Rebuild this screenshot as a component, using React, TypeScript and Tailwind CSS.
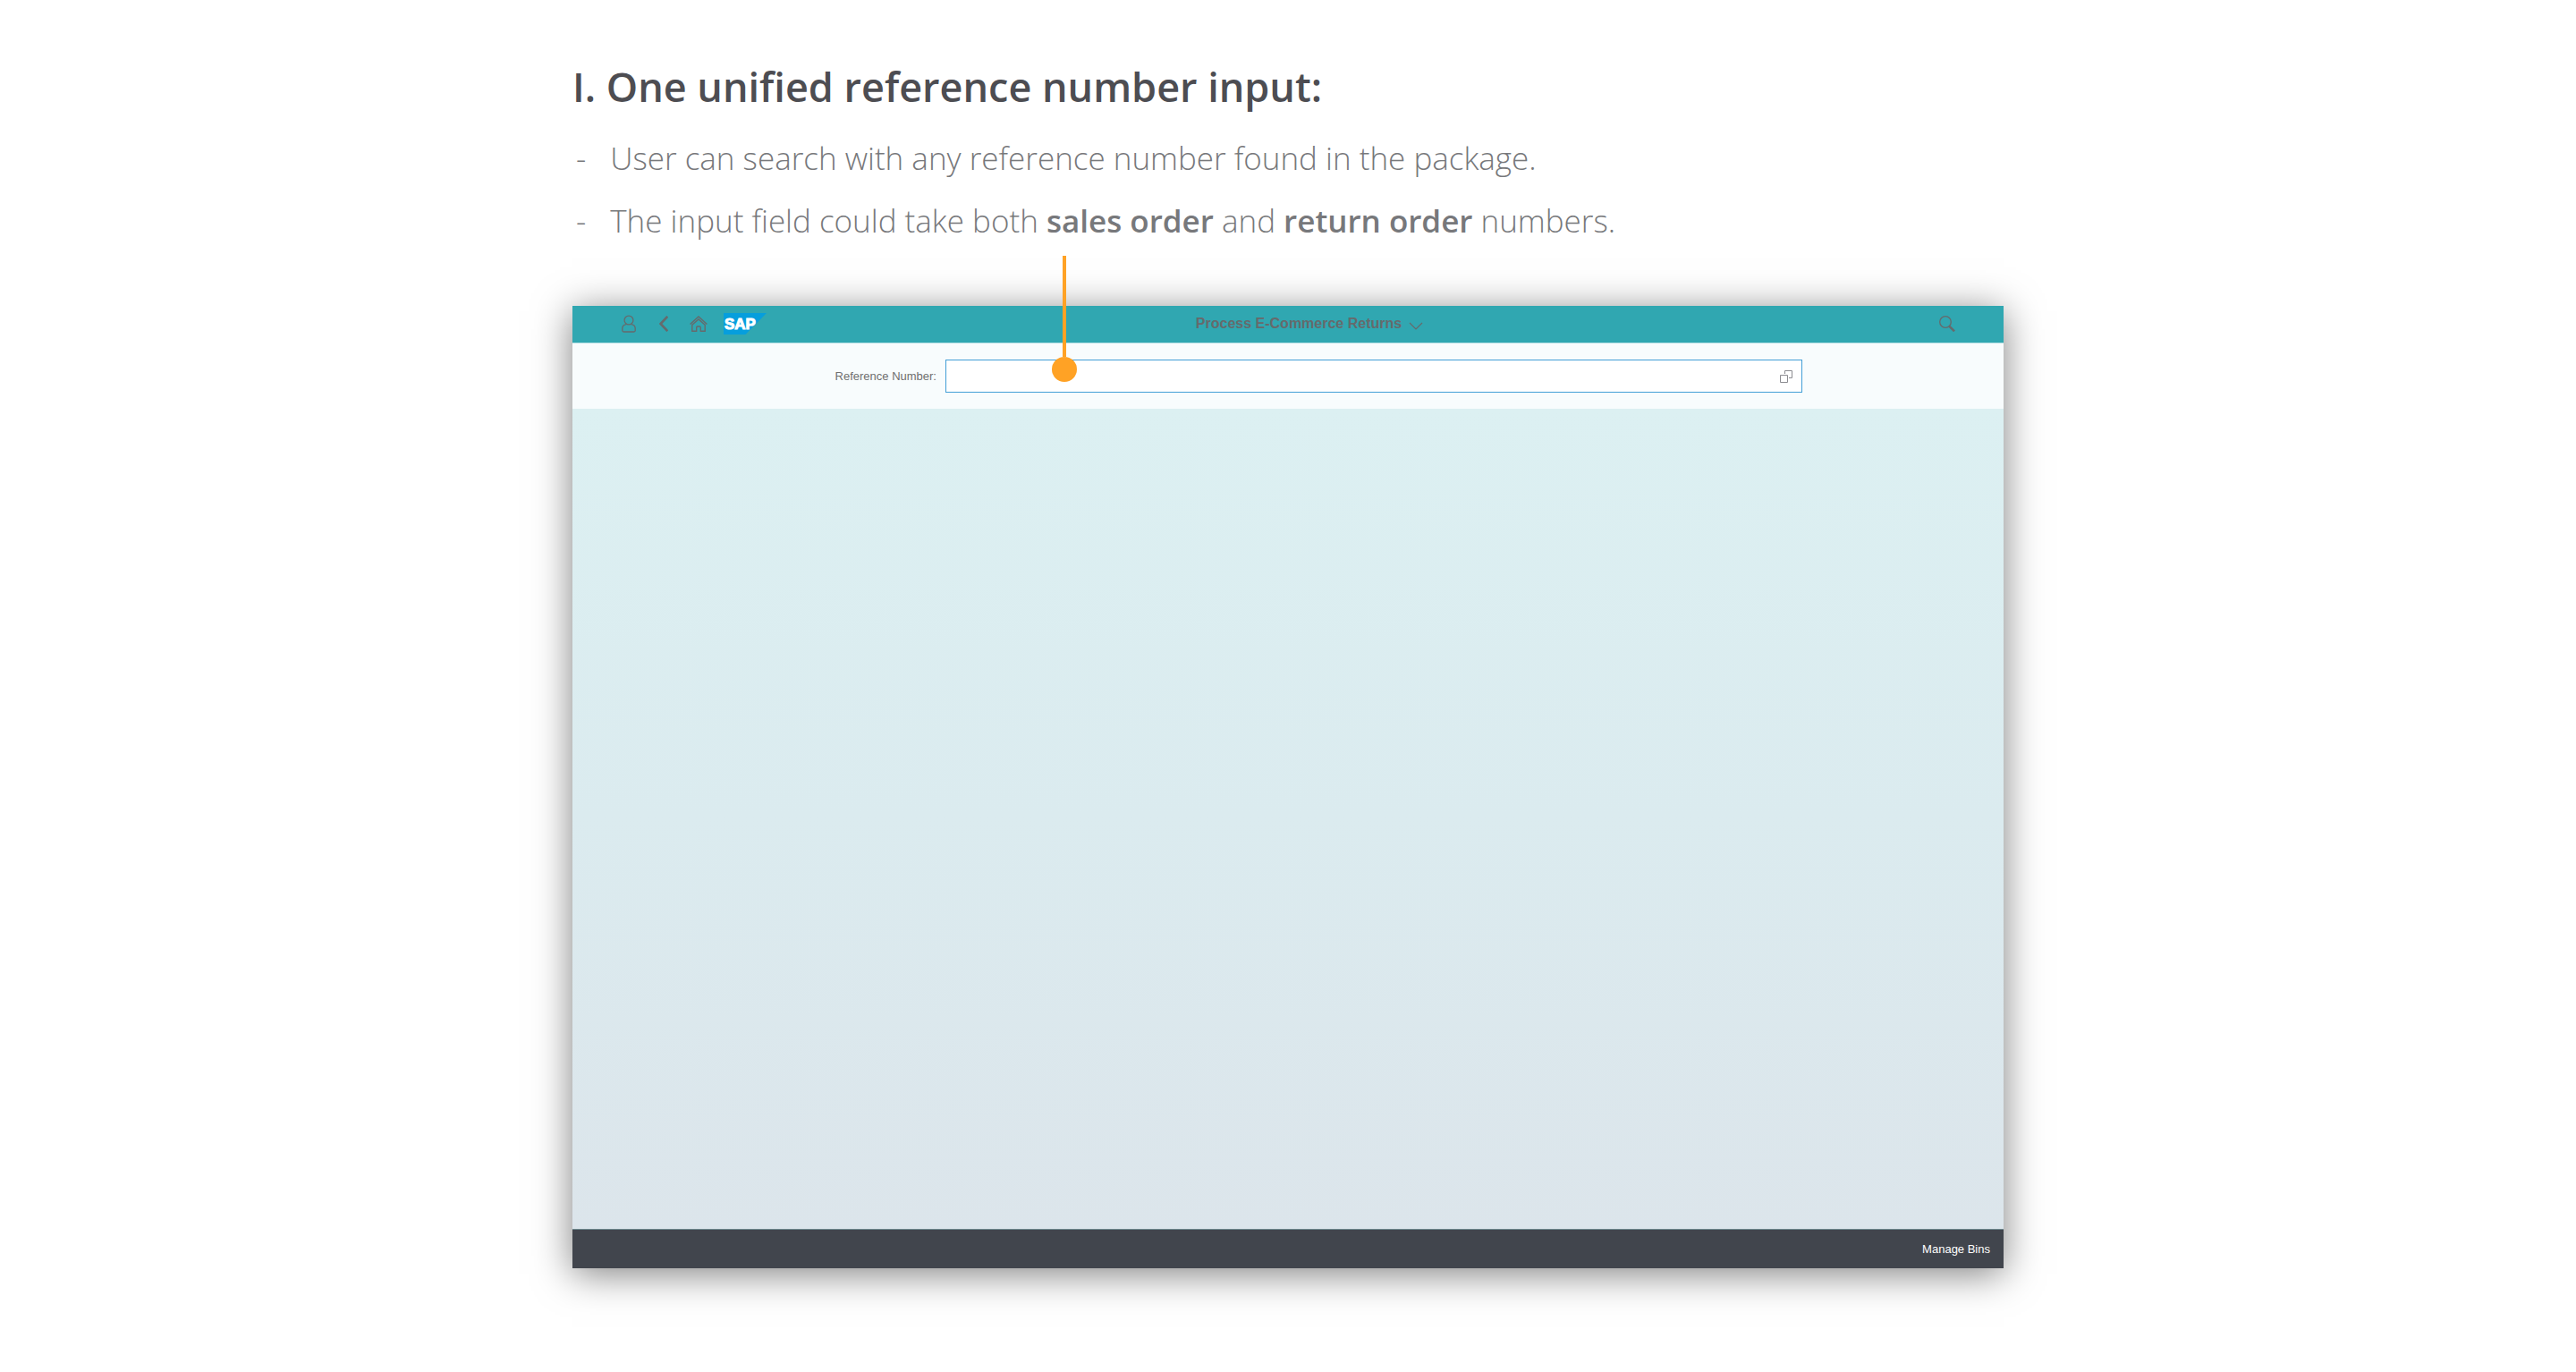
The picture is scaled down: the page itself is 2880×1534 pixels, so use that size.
import React from 'react';

function UserIcon() {
  return (
    <svg width="16" height="20" viewBox="0 0 16 20" fill="none" stroke="currentColor" strokeWidth="1.3" aria-hidden="true">
      <circle cx="8" cy="6" r="4.9" />
      <path d="M5 10.6C2.200 11.200.8 12.600.8 15V17.500Q.8 19 2.300 19H13.700Q15.200 19 15.200 17.500V15C15.200 12.600 13.800 11.200 11 10.600" />
    </svg>
  );
}

function BackIcon() {
  return (
    <svg width="10" height="18" viewBox="0 0 10 18" fill="none" stroke="currentColor" strokeWidth="2.600" aria-hidden="true">
      <path d="M9.300.8 1.500 9 9.300 17.200" />
    </svg>
  );
}

function HomeIcon() {
  return (
    <svg width="20" height="18" viewBox="0 0 20 18" fill="none" stroke="currentColor" strokeWidth="1.400" aria-hidden="true">
      <path d="M.6 9.600 10 1 19.400 9.600" />
      <path d="M2.800 10.300 10 3.900 17.200 10.300V17.300H12.300V13.200Q12.300 12 11.200 12H8.800Q7.700 12 7.700 13.200V17.300H2.800Z" />
    </svg>
  );
}

function SapLogo() {
  return (
    <svg width="48" height="24" viewBox="0 0 48 24" role="img" aria-label="SAP">
      <path d="M0 0H48L24.500 24H0Z" fill="#069edd" />
      <text x="1" y="18" fontFamily="Liberation Sans, Arial, sans-serif" fontWeight="700" fontSize="17" fill="#fff" stroke="#fff" strokeWidth="1">
        SAP
      </text>
    </svg>
  );
}

function ChevronIcon() {
  return (
    <svg width="16" height="9" viewBox="0 0 16 9" fill="none" stroke="currentColor" strokeWidth="1.200" aria-hidden="true">
      <path d="M1 1 8 8 15 1" />
    </svg>
  );
}

function SearchIcon() {
  return (
    <svg width="18" height="18" viewBox="0 0 18 18" fill="none" stroke="currentColor" aria-hidden="true">
      <circle cx="7" cy="7" r="6.300" strokeWidth="1.300" />
      <path d="M11.500 11.800 17 17.300" strokeWidth="2.600" />
    </svg>
  );
}

function ValueHelpIcon() {
  return (
    <svg width="14" height="14" viewBox="0 0 14 14" fill="none" stroke="currentColor" aria-hidden="true">
      <path d="M5.500 4V.5H13.500V8.500H10" />
      <path d="M.5 5.500H8.500V13.500H.5Z" />
    </svg>
  );
}

const noteItem = 'flex gap-[27px]';

export default function App() {
  return (
    <main className="w-full bg-white pt-[65px] pb-[116px]">
      <div className="mx-auto w-full max-w-[1600px] font-['Open_Sans',sans-serif]">
        <h1 className="text-[45px] leading-[64px] font-semibold text-[#4d4d52]">I. One unified reference number input:</h1>
        <ul className="mt-[13px] pl-1 text-[35px] leading-[70px] font-light text-[#77787b]">
          <li className={noteItem}>
            <span aria-hidden="true">-</span>
            <p>User can search with any reference number found in the package.</p>
          </li>
          <li className={noteItem}>
            <span aria-hidden="true">-</span>
            <p>
              The input field could take both <strong className="font-semibold">sales order</strong> and{' '}
              <strong className="font-semibold">return order</strong> numbers.
            </p>
          </li>
        </ul>

        <section className="relative mt-[60px] font-['Liberation_Sans',Arial,sans-serif] shadow-[0_6px_40px_rgba(0,0,0,0.5)]">
          <header className="grid h-[41px] grid-cols-[1fr_auto_1fr] items-center bg-[#30a7b1] pb-[1px] text-[#666a6c]">
            <div className="flex items-center pl-[55px]">
              <button type="button" aria-label="User"><UserIcon /></button>
              <button type="button" aria-label="Back" className="ml-[26px]"><BackIcon /></button>
              <button type="button" aria-label="Home" className="ml-[24px]"><HomeIcon /></button>
              <a href="#" className="ml-[18px]"><SapLogo /></a>
            </div>
            <button type="button" className="ml-[48px] flex items-center gap-[8px] text-[16px] leading-[20px] font-bold">
              Process E-Commerce Returns
              <span className="pt-[4px]"><ChevronIcon /></span>
            </button>
            <button type="button" aria-label="Search" className="mr-[54px] justify-self-end"><SearchIcon /></button>
          </header>

          <div className="grid h-[74px] grid-cols-[417fr_958fr_225fr] items-center border-t border-[#b4dfe3] bg-[#f8fcfd]">
            <label htmlFor="reference" className="pr-[10px] text-right text-[13px] leading-[18px] text-[#6f6f6f]">
              Reference Number:
            </label>
            <div className="flex h-[37px] items-center border border-[#439fd6] bg-white pr-[10px]">
              <input id="reference" type="text" className="h-full min-w-0 flex-1 px-2 text-[13px] outline-none" />
              <button type="button" aria-label="Open value help" className="text-[#8b8b90]"><ValueHelpIcon /></button>
            </div>
          </div>

          <div className="aspect-[1600/917] w-full bg-linear-to-b from-[#dcf0f2] via-[#dbebef] to-[#dce5eb]" />

          <footer className="flex h-[44px] items-center justify-end border-t border-[#6b8489] bg-[#41454d] pr-[15px]">
            <button type="button" className="text-[13px] leading-[18px] text-white">Manage Bins</button>
          </footer>

          <div className="absolute -top-[56px] left-[536px] flex w-[28px] flex-col items-center" aria-hidden="true">
            <span className="h-[113px] w-[4px] bg-[#ffa225]" />
            <span className="size-[28px] rounded-full bg-[#ffa225]" />
          </div>
        </section>
      </div>
    </main>
  );
}
